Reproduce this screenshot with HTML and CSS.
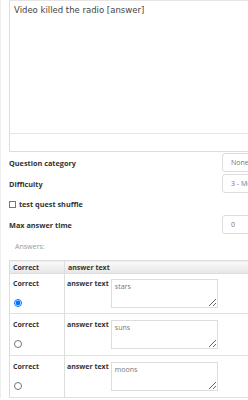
FILE: index.html
```html
<!DOCTYPE html>
<html lang="en">
<head>
  <meta charset="UTF-8" />
  <title>Edit question</title>
  <link rel="stylesheet" href="styles.css">
</head>
<body>
  <div class="page">
    <div class="editor">
      <div class="editor-body">Video killed the radio [answer]</div>
      <div class="editor-status"></div>
    </div>

    <div class="form-rows">
      <div class="form-row">
        <label class="form-label">Question category</label>
        <div class="control">None</div>
      </div>
      <div class="form-row">
        <label class="form-label">Difficulty</label>
        <div class="control">3 - Medium</div>
      </div>
      <div class="form-row check-row">
        <label class="form-label"><input type="checkbox" class="check"> test quest shuffle</label>
      </div>
      <div class="form-row">
        <label class="form-label">Max answer time</label>
        <div class="control">0</div>
      </div>
    </div>

    <div class="answers">
      <div class="answers-title">Answers:</div>
      <table class="answers-table">
        <thead>
          <tr>
            <th class="col-correct">Correct</th>
            <th>answer text</th>
          </tr>
        </thead>
        <tbody>
          <tr class="first-row">
            <td class="col-correct">
              <div class="cell-label">Correct</div>
              <input type="radio" name="correct" class="radio" checked>
            </td>
            <td>
              <span class="cell-label inline">answer text</span>
              <textarea class="answer-input">stars</textarea>
            </td>
          </tr>
          <tr>
            <td class="col-correct">
              <div class="cell-label">Correct</div>
              <input type="radio" name="correct" class="radio">
            </td>
            <td>
              <span class="cell-label inline">answer text</span>
              <textarea class="answer-input">suns</textarea>
            </td>
          </tr>
          <tr>
            <td class="col-correct">
              <div class="cell-label">Correct</div>
              <input type="radio" name="correct" class="radio">
            </td>
            <td>
              <span class="cell-label inline">answer text</span>
              <textarea class="answer-input">moons</textarea>
            </td>
          </tr>
        </tbody>
      </table>
    </div>
  </div>
</body>
</html>
```

FILE: styles.css
```css
* {
  box-sizing: border-box;
  margin: 0;
  padding: 0;
}

html, body {
  overflow: hidden;
}

body {
  font-family: 'Open Sans', sans-serif;
  font-size: 7px;
  color: #333;
  background: #fff;
}

.page {
  width: 300px;
  padding-left: 8px;
  border-left: 1px solid #eee;
}

.editor {
  border-top: 1px solid #e6e6e6;
}

.editor-body {
  height: 133px;
  border-left: 1px solid #ddd;
  border-bottom: 1px solid #e6e6e6;
  padding: 4px 4px;
  font-family: 'DejaVu Sans', Verdana, sans-serif;
  font-size: 8.5px;
  line-height: 11px;
  color: #444;
}

.editor-status {
  height: 18px;
  border-left: 1px solid #ddd;
  border-bottom: 1px solid #ddd;
}

.form-row {
  display: flex;
  align-items: center;
  height: 21px;
}

.form-label {
  width: 213px;
  font-weight: 700;
  font-size: 7.3px;
}

.control {
  width: 60px;
  height: 19px;
  line-height: 17px;
  padding: 0 8px;
  border: 1px solid #ddd;
  border-radius: 3px;
  color: #777;
}

.check-row {
  height: 20px;
}

.check {
  appearance: none;
  display: inline-block;
  width: 7px;
  height: 7px;
  margin: 0 1px 0 0;
  border: 1px solid #777;
  background: #fff;
  vertical-align: -1px;
}

.answers {
  margin-top: 5px;
}

.answers-title {
  color: #999;
  padding-left: 6px;
  height: 20px;
  line-height: 14px;
}

.answers-table {
  border-collapse: collapse;
  width: 290px;
}

.answers-table th {
  text-align: left;
  font-weight: 700;
  height: 13px;
  padding: 0 3px;
  background: linear-gradient(#fafafa, #e6e6e6);
  border: 1px solid #ddd;
  border-right: none;
}

.answers-table th.col-correct,
.answers-table td.col-correct {
  width: 55px;
  border-right: 1px solid #ddd;
}

.answers-table td {
  vertical-align: top;
  height: 42px;
  padding: 6px 2px 0 2px;
  border-bottom: 1px solid #e0e0e0;
}

.answers-table .first-row td {
  height: 40px;
  padding-top: 5px;
}

.answers-table td.col-correct {
  border-left: 1px solid #ddd;
  padding-left: 3px;
}

.cell-label {
  font-weight: 700;
  line-height: 9px;
}

.cell-label.inline {
  display: inline-block;
  vertical-align: top;
  width: 42px;
}

.radio {
  display: block;
  width: 8px;
  height: 8px;
  margin: 11px 0 0 1px;
}

.answer-input {
  width: 107px;
  height: 29px;
  vertical-align: top;
  font-family: 'Open Sans', sans-serif;
  font-size: 7px;
  color: #777;
  border: 1px solid #ddd;
  padding: 2px 3px;
}
```
